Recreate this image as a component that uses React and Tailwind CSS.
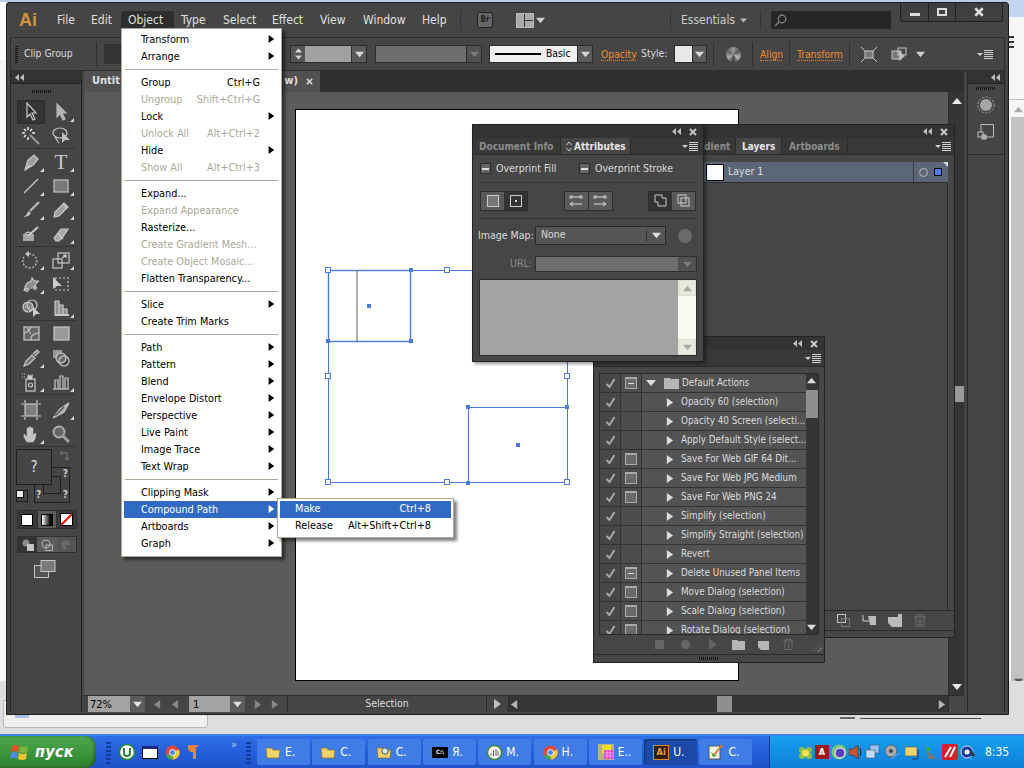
import React from "react";

const Down = ({ c = "#d0d0d0", s = 9 }) => (
  <svg width={s} height={s} viewBox="0 0 10 10"><path d="M0 2h10L5 8z" fill={c} /></svg>
);
const Right = ({ c = "#000", s = 8 }) => (
  <svg width={s} height={s} viewBox="0 0 10 10"><path d="M2 0l7 5-7 5z" fill={c} /></svg>
);
const Up = ({ c = "#e0e0e0", s = 9 }) => (
  <svg width={s} height={s} viewBox="0 0 10 10"><path d="M0 8h10L5 2z" fill={c} /></svg>
);
const Left = ({ c = "#888", s = 9 }) => (
  <svg width={s} height={s} viewBox="0 0 10 10"><path d="M8 0L1 5l7 5z" fill={c} /></svg>
);
const Collapse = ({ c = "#bdbdbd" }) => (
  <svg width="9" height="7" viewBox="0 0 9 7"><path d="M4 0v7L0 3.5zM9 0v7L5 3.5z" fill={c} /></svg>
);
const CloseX = ({ c = "#c8c8c8", s = 8 }) => (
  <svg width={s} height={s} viewBox="0 0 8 8"><path d="M1 1l6 6M7 1L1 7" stroke={c} strokeWidth="2" /></svg>
);
const PanelMenu = () => (
  <svg width="16" height="9" viewBox="0 0 16 9" fill="#d0d0d0">
    <path d="M0 3h6L3 6z" /><path d="M7 0h9v1H7zM7 2h9v1H7zM7 4h9v1H7zM7 6h9v1H7zM7 8h9v1H7z" />
  </svg>
);
const Grip = () => (
  <div className="h-[3px] w-[20px] bg-[repeating-linear-gradient(90deg,#151515_0,#151515_1px,transparent_1px,transparent_2px)]" />
);
const Corner = () => (
  <svg className="absolute right-[1px] bottom-[2px]" width="4" height="4" viewBox="0 0 4 4"><path d="M4 0v4H0z" fill="#d8d8d8" /></svg>
);

const I = ({ children }) => (
  <svg width="20" height="20" viewBox="0 0 20 20" fill="none" stroke="#c9c9c9" strokeWidth="1.2">{children}</svg>
);

const tools = [
  [
    { icon: <I><path d="M6 1v14l3-3 3 6 2-1-3-6h4z" fill="#2e2e2e" /></I>, active: true },
    { icon: <I><path d="M6 2v13l3-3 3 6 2-1-3-6h4z" fill="#b5b5b5" stroke="#b5b5b5" /></I>, corner: true },
    { icon: <I><path d="M9 9l9 9" strokeWidth="2" stroke="#9a9a9a" /><path d="M7 1v3M7 11v3M1 7h3M11 7h3M3 3l2 2M11 3L9 5M3 11l2-2" stroke="#e8e8e8" strokeWidth="1.5" /></I> },
    { icon: <I><ellipse cx="9" cy="7" rx="7" ry="5" /><path d="M4 11q3 5 4 6" /><path d="M11 6v11l3-3h5z" fill="#c0c0c0" stroke="none" /></I> },
  ],
  [
    { icon: <I><path d="M4 18l3-10 6-5 4 4-5 6zM4 18l5-5" fill="#9d9d9d" /></I>, corner: true },
    { text: "T", corner: true },
    { icon: <I><path d="M3 17L17 3" /></I>, corner: true },
    { icon: <I><rect x="3" y="4" width="14" height="12" fill="#787878" stroke="#c4c4c4" /></I>, corner: true },
    { icon: <I><path d="M18 2L9 11" strokeWidth="2.4" stroke="#b5b5b5" /><path d="M2 17q4-1 5-6l3 2q-2 4-8 4z" fill="#c9c9c9" stroke="none" /></I>, corner: true },
    { icon: <I><path d="M3 17l1-5 9-9 4 4-9 9z" fill="#9d9d9d" stroke="#c9c9c9" /><path d="M12 4l4 4" /></I>, corner: true },
    { icon: <I><path d="M2 10h11v7H2z" fill="#a5a5a5" stroke="none" /><path d="M7 12L17 3" strokeWidth="2" /><path d="M4 10q3-3 5-1" /></I> },
    { icon: <I><path d="M3 14l7-9h7l-6 9-3 3H5z" fill="#a8a8a8" /><path d="M7 9l5 6" /></I>, corner: true },
  ],
  [
    { icon: <I><path d="M8 4a7 7 0 1 1-5 3" strokeDasharray="2 1.6" /><path d="M8 1v6L4 4z" fill="#c9c9c9" stroke="none" /></I>, corner: true },
    { icon: <I><rect x="2" y="9" width="9" height="9" /><rect x="7" y="3" width="11" height="10" /><path d="M11 8l4-3M12 5h3v3" /></I>, corner: true },
    { icon: <I><path d="M3 17q2-9 5-9t3-5q1 5 7 4-4 2-4 7" fill="#8f8f8f" /><circle cx="6" cy="16" r="1.4" /><circle cx="14" cy="14" r="1.4" /></I>, corner: true },
    { icon: <I><rect x="4" y="4" width="13" height="12" strokeDasharray="2 2" /><path d="M2 3v12l4-3h5z" fill="#c9c9c9" stroke="none" /></I> },
    { icon: <I><circle cx="7" cy="9" r="5" fill="#808080" /><circle cx="11" cy="7" r="5" /><path d="M2 9h10" strokeDasharray="1 1" /><path d="M12 9v10l3-3h4z" fill="#d0d0d0" stroke="none" /></I> },
    { icon: <I><path d="M4 3h4v14H4zM8 7h4v10H8zM12 11h4v6h-4z" fill="#8f8f8f" /><path d="M4 17h14" strokeWidth="2" /></I>, corner: true },
  ],
  [
    { icon: <I><rect x="3" y="3" width="15" height="13" fill="#666" /><path d="M3 9q5-1 7-6M10 16q-1-6 8-7M6 4q4 5 3 6" /></I> },
    { icon: <I><rect x="3" y="3" width="15" height="13" fill="#999" /></I> },
    { icon: <I><path d="M3 18l2-5 6-6 3 3-6 6zM12 6l4-4 2 2-4 4" fill="#777" /></I>, corner: true },
    { icon: <I><rect x="2" y="2" width="9" height="8" fill="#9a9a9a" stroke="none" /><circle cx="10" cy="10" r="5" fill="#6a6a6a" /><circle cx="13" cy="13" r="5" /></I> },
    { icon: <I><rect x="5" y="7" width="9" height="12" /><circle cx="9.5" cy="13" r="2" /><path d="M1 2h4M1 5h4M7 3h5" strokeDasharray="1 1" /><rect x="7" y="4" width="4" height="3" fill="#c9c9c9" /></I>, corner: true },
    { icon: <I><path d="M2 17h16" /><path d="M4 17V8h3v9M9 17V4h3v13M14 17V6h3v11" /></I>, corner: true },
  ],
  [
    { icon: <I><rect x="4" y="4" width="12" height="12" fill="#7e7e7e" /><path d="M0 4h3M17 4h3M0 16h3M17 16h3M4 0v3M4 17v3M16 0v3M16 17v3" /></I> },
    { icon: <I><path d="M2 18l7-9 9-6-5 9z" fill="#b0b0b0" /><path d="M4 16L13 7" stroke="#4a4a4a" /></I>, corner: true },
    { icon: <I><path d="M6 18Q2 13 3 10l3 3V4h2v6V3h2v7V4h2v7l3-2q0 6-3 9z" fill="#c4c4c4" stroke="#c4c4c4" strokeWidth=".6" /></I>, corner: true },
    { icon: <I><circle cx="8" cy="8" r="5.5" fill="#666" stroke="#b0b0b0" strokeWidth="1.8" /><path d="M12 12l6 6" strokeWidth="3" stroke="#a0a0a0" /></I> },
  ],
];

const Tool = ({ t }) => (
  <div className={`relative flex h-[24px] w-[28px] items-center justify-center ${t.active ? "border border-[#2c2c2c] bg-[#343434]" : ""}`}>
    {t.text ? <span className="font-['Liberation_Serif',serif] text-[21px] leading-none text-[#c9c9c9]">{t.text}</span> : t.icon}
    {t.corner && <Corner />}
  </div>
);

const Toolbar = () => (
  <div className="flex w-[72px] flex-col border-x border-[#262626] bg-[#454545]">
    <div className="flex h-[13px] items-center border-b border-[#222] bg-[#333] pl-[4px]"><Collapse /></div>
    <div className="flex h-[14px] items-center justify-center pr-[8px]"><Grip /></div>
    <div className="flex flex-col items-center pb-[1px] pt-[2px]">
      {tools.map((g, i) => (
        <div key={i} className="w-full">
          <div className="mx-auto grid w-[60px] grid-cols-2 justify-items-center">
            {g.map((t, j) => <Tool key={j} t={t} />)}
          </div>
          <div className={`mx-[5px] h-[1px] bg-[#333] ${i === 3 ? "mb-[3px]" : "mb-[1px]"}`} />
        </div>
      ))}
    </div>
    {/* fill and stroke proxy */}
    <div className="relative ml-[5px] h-[56px] w-[56px]">
      <div className="absolute left-[18px] top-[18px] h-[36px] w-[36px] border border-[#1f1f1f] bg-[#454545]">
        <span className="absolute right-[1px] top-0 text-[10px] font-bold leading-[12px] text-[#ccc]">?</span>
        <span className="absolute bottom-[1px] left-[1px] text-[10px] font-bold leading-[12px] text-[#ccc]">?</span>
        <span className="absolute bottom-[1px] right-[1px] text-[10px] font-bold leading-[12px] text-[#ccc]">?</span>
        <div className="absolute left-[8px] top-[8px] h-[18px] w-[18px] border border-[#1f1f1f]" />
      </div>
      <div className="absolute left-0 top-0 flex h-[36px] w-[36px] items-center justify-center border border-[#1f1f1f] bg-[#454545] text-[15px] text-[#ddd]">?</div>
      <svg className="absolute left-[43px] top-[1px]" width="12" height="12" viewBox="0 0 12 12" fill="none" stroke="#6a6a6a" strokeWidth="1.5"><path d="M1 3h7v6M1 3l2-2M1 3l2 2M8 10L6 8M8 10l2-2" /></svg>
      <div className="absolute left-0 top-[41px] h-[12px] w-[12px] border border-[#1a1a1a]">
        <div className="absolute left-[-1px] top-[-1px] h-[8px] w-[8px] border border-[#111] bg-[#eee]" />
      </div>
    </div>
    <div className="ml-[6px] mt-[5px] flex h-[19px] w-[60px] border border-[#2f2f2f]">
      <div className="flex flex-1 items-center justify-center bg-[#3a3a3a]"><div className="h-[12px] w-[12px] border border-black bg-white" /></div>
      <div className="flex flex-1 items-center justify-center border-x border-[#333] bg-[#5c5c5c]"><div className="h-[12px] w-[12px] border border-black bg-linear-to-r from-white to-black" /></div>
      <div className="flex flex-1 items-center justify-center bg-[#3a3a3a]">
        <svg width="13" height="13" viewBox="0 0 13 13"><rect x=".5" y=".5" width="12" height="12" fill="#fff" stroke="#000" /><path d="M12 1L1 12" stroke="#f00" strokeWidth="2" /></svg>
      </div>
    </div>
    <div className="ml-[6px] mt-[7px] flex h-[17px] w-[60px] border border-[#2f2f2f]">
      <div className="flex flex-1 items-center justify-center bg-[#333]"><svg width="12" height="12" viewBox="0 0 12 12"><circle cx="4" cy="4" r="3.5" fill="#8a8a8a" /><rect x="5" y="5" width="7" height="7" fill="#c4c4c4" /></svg></div>
      <div className="flex flex-1 items-center justify-center bg-[#5c5c5c]"><svg width="12" height="12" viewBox="0 0 12 12" fill="none" stroke="#b5b5b5"><circle cx="5" cy="5" r="4" /><rect x="5" y="6" width="6.5" height="5.5" /></svg></div>
      <div className="flex flex-1 items-center justify-center bg-[#555]"><svg width="12" height="12" viewBox="0 0 12 12"><circle cx="6" cy="6" r="4.5" fill="#6a6a6a" /><rect x="6" y="6" width="4" height="4" fill="#555" /></svg></div>
    </div>
    <div className="ml-[23px] mt-[7px]">
      <svg width="22" height="18" viewBox="0 0 22 18" fill="none" stroke="#c4c4c4"><rect x=".5" y="5.5" width="14" height="12" fill="#555" /><rect x="7" y=".5" width="14" height="11" fill="#7a7a7a" /></svg>
    </div>
  </div>
);

const ArrowBox = ({ c = "#d8d8d8", w = "w-[15px]", bg = "bg-[#5c5c5c]" }) => (
  <div className={`flex h-full items-center justify-center border-l border-[#2b2b2b] ${w} ${bg}`}><Down c={c} /></div>
);
const Sep = ({ cls }) => <div className={`h-[24px] w-[1px] bg-[#303030] ${cls}`} />;
const Link = ({ children, cls }) => (
  <span className={`whitespace-nowrap border-b border-dotted border-[#e8852b] leading-[12px] text-[#f08c2e] ${cls}`}>{children}</span>
);

const ControlBar = () => (
  <div className="flex h-[34px] items-center border border-[#2e2e2e] bg-[#454545] text-[10.3px] text-[#dcdcdc]">
    <div className="ml-[4px] h-[18px] w-[3px] bg-[repeating-linear-gradient(0deg,#151515_0,#151515_1px,transparent_1px,transparent_2px)]" />
    <span className="ml-[6px] w-[61px] whitespace-nowrap">Clip Group</span>
    <Sep cls="ml-[11px]" />
    <div className="ml-[7px] h-[20px] w-[20px] bg-[#333]" />
    <div className="ml-[166px] flex h-[18px] border border-[#2b2b2b]">
      <div className="flex w-[14px] flex-col items-center justify-center bg-[#555]"><Up s={7} /><Down s={7} /></div>
      <div className="w-[46px] bg-[#a0a0a0]" />
      <ArrowBox />
    </div>
    <div className="ml-[8px] flex h-[18px] border border-[#2b2b2b]">
      <div className="w-[90px] bg-[#6e6e6e]" />
      <ArrowBox c="#7a7a7a" bg="bg-[#505050]" />
    </div>
    <div className="ml-[7px] flex h-[18px] border border-[#2b2b2b]">
      <div className="flex w-[87px] items-center bg-[#efefef] pl-[5px]">
        <div className="h-[2px] w-[46px] bg-black" />
        <span className="ml-[5px] text-black">Basic</span>
      </div>
      <ArrowBox />
    </div>
    <Link cls="ml-[8px] w-[35px]">Opacity</Link>
    <span className="ml-[5px] w-[28px] whitespace-nowrap">Style:</span>
    <div className="ml-[5px] flex h-[18px] border border-[#2b2b2b]">
      <div className="w-[17px] bg-[#e8e8e8]" />
      <ArrowBox w="w-[14px]" />
    </div>
    <Sep cls="ml-[6px]" />
    <div className="ml-[12px] h-[15px] w-[15px] rounded-full bg-[conic-gradient(#999,#555,#bbb,#444,#aaa,#666,#999)]" />
    <Sep cls="ml-[11px]" />
    <Link cls="ml-[7px] w-[22px]">Align</Link>
    <Sep cls="ml-[7px]" />
    <Link cls="ml-[7px] w-[45px]">Transform</Link>
    <Sep cls="ml-[7px]" />
    <svg className="ml-[11px]" width="16" height="15" viewBox="0 0 16 15" fill="none" stroke="#c8c8c8"><rect x="4" y="4" width="8" height="7" fill="#777" /><path d="M0 0l4 4M16 0l-4 4M0 15l4-4M16 15l-4-4" /></svg>
    <svg className="ml-[14px]" width="17" height="15" viewBox="0 0 17 15" fill="none" stroke="#c8c8c8"><rect x="1" y="4" width="9" height="8" fill="#777" /><rect x="7" y="1" width="8" height="7" /><path d="M8 4v10l6-5z" fill="#bbb" stroke="none" /></svg>
    <div className="ml-[8px]"><Down /></div>
    <div className="ml-[52px]"><PanelMenu /></div>
  </div>
);

const menuNames = [
  ["File", "w-[34px]"], ["Edit", "w-[37px]"], ["Object", "w-[53px]"], ["Type", "w-[42px]"], ["Select", "w-[49px]"],
  ["Effect", "w-[48px]"], ["View", "w-[43px]"], ["Window", "w-[59px]"], ["Help", "w-[45px]"],
];

const TitleBar = () => (
  <div className="relative flex h-[34px] items-center text-[12px] text-[#e0e0e0]">
    <span className="ml-[9px] w-[31px] font-['Liberation_Sans',sans-serif] text-[18px] font-bold leading-none text-[#d2923a]">Ai</span>
    {menuNames.map(([n, w]) => (
      <div key={n} className={`flex h-[18px] items-center pl-[7px] ${w} ${n === "Object" ? "rounded-t-[2px] bg-[#2e2e2e]" : ""}`}>{n}</div>
    ))}
    <div className="h-[20px] w-[1px] bg-[#333]" />
    <div className="ml-[16px] flex h-[16px] w-[16px] items-center justify-center rounded-[2px] border border-[#222] bg-[#666] text-[8px] font-bold text-[#222]">Br</div>
    <div className="ml-[23px] flex h-[15px] w-[18px] border border-[#bbb] bg-[#888]">
      <div className="w-[8px] border-r border-[#333] bg-[#aaa]" />
      <div className="flex-1 border-b-0 bg-[linear-gradient(#aaa_45%,#333_45%,#333_55%,#aaa_55%)]" />
    </div>
    <div className="ml-[2px]"><Down /></div>
    <div className="ml-[125px] h-[20px] w-[1px] bg-[#333]" />
    <span className="ml-[10px] w-[51px] text-[12px] text-[#ccc]">Essentials</span>
    <div className="ml-[8px]"><Down c="#bbb" s={7} /></div>
    <div className="ml-[13px] h-[20px] w-[1px] bg-[#333]" />
    <div className="ml-[10px] flex h-[18px] w-[120px] items-center rounded-[2px] bg-[#262626] pl-[3px]">
      <svg width="13" height="13" viewBox="0 0 13 13" fill="none" stroke="#8a8a8a" strokeWidth="1.2"><circle cx="8" cy="5" r="3.8" /><path d="M5 8l-4 4" /></svg>
    </div>
    <div className="absolute right-[2px] top-0 flex h-[19px] w-[103px] rounded-b-[3px] border border-t-0 border-[#202020] bg-[#3f3f3f]">
      <div className="flex w-[28px] items-center justify-center border-r border-[#202020]"><div className="mt-[4px] h-[3px] w-[10px] bg-[#ddd]" /></div>
      <div className="flex w-[27px] items-center justify-center border-r border-[#202020]"><div className="h-[8px] w-[10px] border-2 border-[#ddd]" /></div>
      <div className="flex flex-1 items-center justify-center"><CloseX c="#ddd" s={10} /></div>
    </div>
  </div>
);

const StatusBar = () => (
  <div className="flex h-[17px] items-stretch border-t border-[#2b2b2b] bg-[#454545] text-[#dcdcdc]">
    <div className="ml-[4px] w-[42px] bg-[#a3a3a3] pl-[2px] text-[11px] leading-[17px] text-black">72%</div>
    <div className="flex w-[15px] items-center justify-center bg-[#5c5c5c]"><Down c="#e0e0e0" /></div>
    <div className="flex w-[44px] items-center justify-center gap-[9px]"><Left /><Left /></div>
    <div className="w-[41px] bg-[#a3a3a3] pl-[4px] text-[11px] leading-[17px] text-black">1</div>
    <div className="flex w-[15px] items-center justify-center bg-[#5c5c5c]"><Down c="#e0e0e0" /></div>
    <div className="flex w-[42px] items-center justify-center gap-[8px]"><Right c="#888" s={9} /><Right c="#888" s={9} /></div>
    <div className="flex w-[200px] items-center justify-center border-x border-[#2b2b2b] text-[10.5px]">Selection</div>
    <div className="flex w-[21px] items-center justify-center"><Right c="#c0c0c0" s={10} /></div>
    <div className="relative flex-1 border-l border-[#2b2b2b] bg-[#363636]">
      <div className="absolute left-[1px] top-[4px]"><Left c="#b5b5b5" /></div>
      <div className="absolute right-[2px] top-[4px]"><Right c="#b5b5b5" s={9} /></div>
      <div className="absolute left-[208px] top-0 h-full w-[15px] bg-[#8f8f8f]" />
    </div>
    <div className="w-[16px] border-l border-[#2b2b2b] bg-[#484848]" />
  </div>
);

const H = ({ x, y }) => <rect x={x - 2.5} y={y - 2.5} width="5" height="5" fill="#fff" stroke="#4a7bdc" />;
const B = ({ x, y }) => <rect x={x - 2} y={y - 2} width="4" height="4" fill="#4a7bdc" />;

const Artwork = () => (
  <svg className="absolute inset-0" width="442" height="570" viewBox="296 110 442 570" fill="none">
    <rect x="328.5" y="270.5" width="239" height="212" stroke="#4a7bdc" />
    <rect x="328.5" y="270.5" width="82" height="71" stroke="#4a7bdc" strokeWidth="1.4" />
    <path d="M357 270v71" stroke="#8a8a8a" strokeWidth="1.4" />
    <rect x="468.5" y="407.5" width="99" height="75" stroke="#4a7bdc" />
    <B x={369} y={306} /><B x={518} y={445} />
    <B x={328} y={270} /><B x={411} y={270} /><B x={411} y={341} /><B x={328} y={341} />
    <B x={468} y={407} /><B x={567} y={407} /><B x={468} y={483} />
    <H x={328} y={270} /><H x={447} y={270} /><H x={328} y={376} /><H x={567} y={376} />
    <H x={328} y={482} /><H x={447} y={482} /><H x={567} y={482} />
  </svg>
);

const DocArea = () => (
  <div className="ml-[2px] flex w-[881px] flex-col">
    <div className="flex h-[21px] bg-[#303030]">
      <div className="flex w-[236px] items-center justify-between bg-[#515151] pl-[8px] pr-[7px] text-[11px] font-bold text-[#e0e0e0]">
        <span className="whitespace-nowrap">Untit</span>
        <span className="flex items-center gap-[8px]"><span>w)</span><CloseX c="#ccc" s={7} /></span>
      </div>
    </div>
    <div className="flex min-h-0 flex-1">
      <div className="relative flex-1 bg-[#5b5b5b]">
        <div className="absolute left-[212px] top-[18px] h-[570px] w-[442px] bg-white outline outline-1 outline-black">
          <Artwork />
        </div>
      </div>
      <div className="relative w-[16px] border-l border-[#2b2b2b] bg-[#353535]">
        <div className="absolute left-[3px] top-[4px]"><Up c="#e8e8e8" s={10} /></div>
        <div className="absolute left-[5px] top-[294px] h-[16px] w-[10px] bg-[#999]" />
        <div className="absolute bottom-[3px] left-[3px]"><Down c="#e8e8e8" s={10} /></div>
      </div>
    </div>
    <StatusBar />
  </div>
);

const RightStrip = () => (
  <div className="ml-[3px] flex w-[38px] flex-col border-x border-[#262626] bg-[#454545]">
    <div className="flex h-[13px] items-center justify-end border-b border-[#222] bg-[#333] pr-[4px]"><Collapse /></div>
    <div className="flex h-[8px] items-center justify-center"><Grip /></div>
    <div className="flex h-[63px] flex-col items-center gap-[9px] border-b border-[#2b2b2b] pt-[4px]">
      <svg width="18" height="18" viewBox="0 0 18 18"><circle cx="9" cy="9" r="6" fill="#a5a5a5" /><circle cx="9" cy="9" r="8" fill="none" stroke="#9a9a9a" strokeDasharray="2.5 1.2" /></svg>
      <svg width="18" height="18" viewBox="0 0 18 18" fill="none" stroke="#bdbdbd"><path d="M4 9V1.5h12.5V14H9" /><rect x="1" y="9" width="5" height="5" /><rect x="5" y="12" width="4" height="4" fill="#aaa" /></svg>
    </div>
  </div>
);

const menuItems = [
  ["Transform", "", "s"], ["Arrange", "", "s"], "-",
  ["Group", "Ctrl+G"], ["Ungroup", "Shift+Ctrl+G", "d"], ["Lock", "", "s"], ["Unlock All", "Alt+Ctrl+2", "d"], ["Hide", "", "s"], ["Show All", "Alt+Ctrl+3", "d"], "-",
  ["Expand..."], ["Expand Appearance", "", "d"], ["Rasterize..."], ["Create Gradient Mesh...", "", "d"], ["Create Object Mosaic...", "", "d"], ["Flatten Transparency..."], "-",
  ["Slice", "", "s"], ["Create Trim Marks"], "-",
  ["Path", "", "s"], ["Pattern", "", "s"], ["Blend", "", "s"], ["Envelope Distort", "", "s"], ["Perspective", "", "s"], ["Live Paint", "", "s"], ["Image Trace", "", "s"], ["Text Wrap", "", "s"], "-",
  ["Clipping Mask", "", "s"], ["Compound Path", "", "s", "a"], ["Artboards", "", "s"], ["Graph", "", "s"],
];

const ObjectMenu = () => (
  <div className="absolute left-[121px] top-[28px] z-20 w-[161px] border border-[#aca899] bg-white px-[2px] pb-[4px] pt-[2px] text-[10.8px] leading-[17px] text-black shadow-[3px_3px_3px_rgba(0,0,0,0.5)]">
    {menuItems.map((m, i) =>
      m === "-" ? (
        <div key={i} className="flex h-[9px] items-center px-[1px]"><div className="h-[1px] w-full bg-[#aca899]" /></div>
      ) : (
        <div key={i} className={`relative flex h-[17px] items-center justify-between pl-[17px] pr-[19px] ${m[3] ? "bg-[#316ac5] text-white" : ""} ${m[2] === "d" ? "text-[#aca899]" : ""}`}>
          <span className="whitespace-nowrap">{m[0]}</span>
          <span className="whitespace-nowrap">{m[1]}</span>
          {m[2] === "s" && <div className="absolute right-[4px] top-[4px]"><Right c={m[3] ? "#fff" : "#000"} /></div>}
        </div>
      )
    )}
  </div>
);

const SubMenu = () => (
  <div className="absolute left-[277px] top-[498px] z-30 w-[177px] border border-[#aca899] bg-white px-[2px] py-[2px] text-[10.8px] text-black shadow-[3px_3px_3px_rgba(0,0,0,0.5)]">
    <div className="flex h-[17px] items-center justify-between bg-[#316ac5] pl-[15px] pr-[20px] text-white"><span>Make</span><span>Ctrl+8</span></div>
    <div className="flex h-[17px] items-center justify-between pl-[15px] pr-[20px]"><span>Release</span><span>Alt+Shift+Ctrl+8</span></div>
  </div>
);

const PanelTop = () => (
  <div className="flex h-[13px] items-center justify-end gap-[8px] rounded-t-[2px] bg-[#333] pr-[6px]"><Collapse /><CloseX /></div>
);

const Tab = ({ children, active, cls }) => (
  <div className={`flex h-full items-center whitespace-nowrap border-r border-[#2a2a2a] font-bold ${active ? "bg-[#464646] text-[#e6e6e6]" : "text-[#8c8c8c]"} ${cls}`}>{children}</div>
);

const LayersPanel = () => (
  <div className="absolute left-[620px] top-[124px] z-10 flex h-[514px] w-[335px] flex-col border border-[#222] bg-[#464646] text-[10.5px] text-[#dcdcdc]">
    <PanelTop />
    <div className="flex h-[17px] border-b border-[#2a2a2a] bg-[#383838] text-[10px]">
      <div className="w-[83px]" />
      <Tab cls="w-[32px]"><span className="pl-[0px]">dient</span></Tab>
      <Tab active cls="w-[46px] pl-[6px]">Layers</Tab>
      <Tab cls="w-[66px] pl-[7px]">Artboards</Tab>
      <div className="ml-auto self-center pr-[3px]"><PanelMenu /></div>
    </div>
    <div className="ml-[83px] mr-[6px] mt-[7px] flex h-[21px] items-center border-b border-[#2a2a2a] bg-[#5b6678]">
      <div className="ml-[2px] h-[17px] w-[18px] border border-black bg-white" />
      <span className="ml-[4px]">Layer 1</span>
      <div className="relative ml-auto flex h-full w-[35px] items-center gap-[6px] border-l border-[#3a3a3a] pl-[5px]">
        <div className="h-[9px] w-[9px] rounded-full border border-[#bbb]" />
        <div className="h-[8px] w-[8px] border border-black bg-[#4a80ff]" />
        <svg className="absolute right-0 top-0" width="5" height="5" viewBox="0 0 5 5"><path d="M0 0h5v5z" fill="#ddd" /></svg>
      </div>
    </div>
    <div className="ml-[83px] mr-[6px] flex-1 border-r border-[#2a2a2a]" />
    <div className="ml-[204px] flex h-[20px] items-center gap-[12px] border-t border-[#2a2a2a] pl-[12px]">
      <svg width="13" height="13" viewBox="0 0 13 13" fill="none" stroke="#c4c4c4"><rect x=".5" y=".5" width="8" height="8" /><rect x="4.5" y="4.5" width="8" height="8" stroke="#777" /></svg>
      <svg width="14" height="13" viewBox="0 0 14 13"><path d="M6 2h8v9H8z" fill="#bbb" /><path d="M1 1v6h6" fill="none" stroke="#ccc" /></svg>
      <svg width="14" height="13" viewBox="0 0 14 13"><path d="M0 3h10V0h4v13H4L0 9z" fill="#bbb" /></svg>
      <svg width="12" height="13" viewBox="0 0 12 13" fill="none" stroke="#6e6e6e"><path d="M0 3h12M3 3V1h6v2M2 3v9h8V3M5 5v6M7 5v6" /></svg>
    </div>
    <div className="ml-[204px] h-[7px] border-t border-[#2a2a2a]" />
  </div>
);

const Check = ({ label, cls }) => (
  <div className={`flex items-center gap-[5px] ${cls}`}>
    <div className="flex h-[11px] w-[11px] items-center justify-center border border-[#2a2a2a] bg-[#666]"><div className="h-[2px] w-[7px] bg-[#ddd]" /></div>
    <span>{label}</span>
  </div>
);

const Seg = ({ on, children }) => (
  <div className={`flex h-full w-[23px] items-center justify-center ${on ? "bg-[#333]" : "bg-[#5a5a5a]"}`}>{children}</div>
);
const AlignIcon = ({ flip }) => (
  <svg width="14" height="12" viewBox="0 0 14 12" fill="none" stroke="#ddd"><circle cx="2" cy="2" r="1.2" /><circle cx="12" cy="2" r="1.2" /><path d="M3 2h8" /><path d={flip ? "M1 9h12M10 7l3 2-3 2" : "M13 9H1M4 7L1 9l3 2"} /></svg>
);

const AttributesPanel = () => (
  <div className="absolute left-[472px] top-[124px] z-[15] flex h-[238px] w-[232px] flex-col border border-[#222] bg-[#464646] text-[10.5px] text-[#dcdcdc] shadow-[2px_2px_3px_rgba(0,0,0,0.4)]">
    <PanelTop />
    <div className="flex h-[17px] border-b border-[#2a2a2a] bg-[#383838] text-[10px]">
      <Tab cls="w-[88px] pl-[6px]">Document Info</Tab>
      <Tab active cls="w-[70px] pl-[5px]">
        <svg className="mr-[2px]" width="6" height="11" viewBox="0 0 6 11" fill="none" stroke="#ccc"><path d="M.5 4L3 1l2.5 3M.5 7L3 10l2.5-3" /></svg>
        Attributes
      </Tab>
      <div className="ml-auto self-center pr-[5px]"><PanelMenu /></div>
    </div>
    <div className="flex h-[27px] items-center">
      <Check label="Overprint Fill" cls="ml-[7px] w-[99px]" />
      <Check label="Overprint Stroke" />
    </div>
    <div className="mx-[7px] h-[1px] bg-[#333]" />
    <div className="flex h-[35px] items-center justify-between px-[7px]">
      <div className="flex h-[20px] border border-[#2e2e2e]">
        <Seg><div className="h-[12px] w-[12px] border border-[#ccc] bg-[#777]" /></Seg>
        <Seg on><div className="flex h-[12px] w-[12px] items-center justify-center border border-[#ccc]"><div className="h-[2px] w-[2px] bg-[#ddd]" /></div></Seg>
      </div>
      <div className="flex h-[20px] border border-[#2e2e2e]">
        <Seg><AlignIcon /></Seg>
        <div className="w-[1px] bg-[#2e2e2e]" />
        <Seg><AlignIcon flip /></Seg>
      </div>
      <div className="flex h-[20px] border border-[#2e2e2e]">
        <Seg on><svg width="13" height="13" viewBox="0 0 13 13" fill="none" stroke="#ccc"><path d="M1 1h7v3h4v8H4V8H1z" /></svg></Seg>
        <Seg><svg width="13" height="13" viewBox="0 0 13 13" fill="none" stroke="#ccc"><rect x="1" y="1" width="8" height="8" /><rect x="4" y="4" width="8" height="8" /></svg></Seg>
      </div>
    </div>
    <div className="mx-[7px] h-[1px] bg-[#333]" />
    <div className="mt-[7px] flex h-[19px] items-center">
      <span className="ml-[5px] w-[57px] whitespace-nowrap">Image Map:</span>
      <div className="flex h-full w-[131px] items-center border border-[#2a2a2a] bg-[#565656]">
        <span className="flex-1 pl-[5px] pb-[1px]">None</span>
        <div className="mr-[1px] h-[13px] w-[1px] bg-[#333]" />
        <div className="flex w-[17px] justify-center"><Down c="#e0e0e0" /></div>
      </div>
      <div className="ml-[12px] h-[14px] w-[14px] rounded-full bg-[#6a6a6a]" />
    </div>
    <div className="mt-[11px] flex h-[16px] items-center">
      <span className="w-[59px] pr-[0px] text-right text-[#8c8c8c]">URL:</span>
      <div className="ml-[3px] flex h-full w-[162px] border border-[#2f2f2f] bg-[#6e6e6e]">
        <div className="flex-1" />
        <div className="flex w-[18px] items-center justify-center bg-[#505050]"><Down c="#7a7a7a" /></div>
      </div>
    </div>
    <div className="ml-[6px] mt-[7px] flex h-[77px] w-[218px] border border-[#2a2a2a] bg-[#a3a3a3]">
      <div className="flex-1" />
      <div className="flex w-[18px] flex-col justify-between bg-[#fbfbf3]">
        <div className="flex h-[16px] items-center justify-center border border-[#ddddd0] bg-[#e9e9df]"><Up c="#aaa" /></div>
        <div className="flex h-[16px] items-center justify-center border border-[#ddddd0] bg-[#e9e9df]"><Down c="#aaa" /></div>
      </div>
    </div>
  </div>
);

const actionRows = [
  ["Opacity 60 (selection)", ""], ["Opacity 40 Screen (selecti...", ""], ["Apply Default Style (select...", ""],
  ["Save For Web GIF 64 Dit...", "b"], ["Save For Web JPG Medium", "b"], ["Save For Web PNG 24", "b"],
  ["Simplify (selection)", ""], ["Simplify Straight (selection)", ""], ["Revert", ""],
  ["Delete Unused Panel Items", "m"], ["Move Dialog (selection)", "b"], ["Scale Dialog (selection)", "b"], ["Rotate Dialog (selection)", "b"],
];

const Tick = () => (
  <svg width="11" height="11" viewBox="0 0 11 11" fill="none"><path d="M1.5 6l3 3 5-8" stroke="#a8a8a8" strokeWidth="2" /></svg>
);
const Dlg = ({ minus }) => (
  <div className="flex h-[12px] w-[12px] items-center justify-center border border-[#aaa] bg-[#6a6a6a] [border-top-width:2px]">
    {minus && <div className="h-[1px] w-[6px] bg-[#ddd]" />}
  </div>
);

const Row = ({ dlg, children }) => (
  <div className="flex h-[19px] shrink-0 border-b border-[#333]">
    <div className="flex w-[21px] shrink-0 items-center justify-center border-r border-[#333] bg-[#474747]"><Tick /></div>
    <div className="flex w-[21px] shrink-0 items-center justify-center border-r border-[#333] bg-[#4c4c4c]">{dlg && <Dlg minus={dlg === "m"} />}</div>
    <div className="flex min-w-0 flex-1 items-center whitespace-nowrap bg-[#535353] text-[9.8px] text-[#dcdcdc]">{children}</div>
  </div>
);

const ActionsPanel = () => (
  <div className="absolute left-[593px] top-[336px] z-[12] flex h-[327px] w-[232px] flex-col border border-[#222] bg-[#464646]">
    <PanelTop />
    <div className="flex h-[17px] justify-end border-b border-[#2a2a2a] bg-[#383838] pr-[3px] pt-[4px]"><PanelMenu /></div>
    <div className="mx-[5px] mt-[6px] flex h-[262px] overflow-hidden border border-[#2a2a2a]">
      <div className="flex min-w-0 flex-1 flex-col overflow-hidden">
        <Row dlg="m">
          <div className="ml-[4px]"><Down c="#ddd" s={10} /></div>
          <svg className="ml-[8px]" width="15" height="12" viewBox="0 0 15 12"><path d="M0 1h6l1 1h8v10H0z" fill="#b5b5b5" /></svg>
          <span className="ml-[3px]">Default Actions</span>
        </Row>
        {actionRows.map(([n, d]) => (
          <Row key={n} dlg={d}>
            <div className="ml-[23px]"><Right c="#ddd" s={9} /></div>
            <span className="ml-[7px]">{n}</span>
          </Row>
        ))}
      </div>
      <div className="relative w-[12px] shrink-0 bg-[#353535]">
        <div className="absolute left-[1px] top-[2px]"><Up c="#ddd" /></div>
        <div className="absolute left-0 top-[16px] h-[28px] w-[12px] bg-[#8f8f8f]" />
        <div className="absolute bottom-[2px] left-[1px]"><Down c="#ddd" /></div>
      </div>
    </div>
    <div className="relative flex h-[19px] items-center pl-[61px]">
      <div className="h-[9px] w-[9px] bg-[#656565]" />
      <div className="ml-[17px] h-[9px] w-[9px] rounded-full bg-[#656565]" />
      <div className="ml-[17px]"><Right c="#656565" s={11} /></div>
      <svg className="ml-[14px]" width="13" height="10" viewBox="0 0 13 10"><path d="M0 0h5l1 1h7v9H0z" fill="#b5b5b5" /></svg>
      <svg className="ml-[13px]" width="11" height="11" viewBox="0 0 11 11"><path d="M0 2h11v9H3L0 8z" fill="#b5b5b5" /></svg>
      <svg className="ml-[14px]" width="11" height="11" viewBox="0 0 11 11" fill="none" stroke="#6a6a6a"><path d="M0 2h11M3 2V.5h5V2M2 2v8.5h7V2M5.5 4v5" /></svg>
      <div className="absolute bottom-[2px] right-[2px] h-[9px] w-[9px] bg-[repeating-linear-gradient(135deg,#777_0,#777_1px,transparent_1px,transparent_3px)] [clip-path:polygon(100%_0,100%_100%,0_100%)]" />
    </div>
    <div className="flex h-[8px] items-center justify-center border-t border-[#2a2a2a]"><Grip /></div>
  </div>
);

const TaskIcon = ({ k }) => {
  if (k === "folder") return <svg width="15" height="13" viewBox="0 0 15 13"><path d="M0 2h6l1 2h7l-1 8H1z" fill="#f2d26a" stroke="#8a6d1a" strokeWidth=".7" /></svg>;
  if (k === "search") return <svg width="15" height="13" viewBox="0 0 15 13"><path d="M0 2h6l1 2h7l-1 8H1z" fill="#f2d26a" stroke="#8a6d1a" strokeWidth=".7" /><circle cx="8" cy="5" r="3.2" fill="#cfe8ff" stroke="#555" /></svg>;
  if (k === "cmd") return <div className="flex h-[11px] w-[16px] items-center justify-center bg-black text-[6px] font-bold leading-none text-white">C:\</div>;
  if (k === "bars") return <svg width="15" height="15" viewBox="0 0 15 15"><circle cx="7.5" cy="7.5" r="7" fill="#fff" stroke="#3a8a3a" strokeWidth="1.5" /><path d="M4 11V8M6.5 11V5M9 11V4M11 11V6" stroke="#555" /></svg>;
  if (k === "chrome") return <svg width="15" height="15" viewBox="0 0 15 15"><circle cx="7.5" cy="7.5" r="7" fill="#e0483c" /><path d="M7.5 7.5L1 11a7 7 0 0 0 7 3.5z" fill="#3fa850" /><path d="M7.5 7.5L8 14.5a7 7 0 0 0 6-10z" fill="#f5c932" /><circle cx="7.5" cy="7.5" r="3" fill="#4a86e8" stroke="#fff" /></svg>;
  if (k === "grid") return <svg width="16" height="16" viewBox="0 0 16 16"><rect width="16" height="16" fill="#b9b08a" /><rect x="4" y="1" width="9" height="8" fill="#f0e020" /><rect x="6" y="6" width="9" height="9" fill="#e040d0" /><path d="M9 6v9M12 6v9M6 9h9M6 12h9" stroke="#fff" strokeWidth=".5" /></svg>;
  if (k === "ai") return <div className="flex h-[15px] w-[16px] items-center justify-center border border-[#e08a20] bg-[#2e2010] text-[9px] font-bold leading-none text-[#e8a040]">Ai</div>;
  return <svg width="16" height="16" viewBox="0 0 16 16"><rect x="1" y="2" width="11" height="13" fill="#f4f4e4" stroke="#555" /><path d="M3 8l2 5 4-1z" fill="#50a040" /><path d="M6 11l8-10" stroke="#d08020" strokeWidth="2" /></svg>;
};

const taskButtons = [
  ["folder", "Е."], ["folder", "С."], ["search", "С."], ["cmd", "Я."], ["bars", "М."], ["chrome", "Н."], ["grid", "Е.."], ["ai", "U.", true], ["note", "С."],
];

const TrayIcons = () => (
  <div className="ml-[28px] flex items-center gap-[2px]">
    <svg width="15" height="15" viewBox="0 0 15 15"><circle cx="4" cy="5" r="3" fill="#8bc34a" /><circle cx="11" cy="5" r="3" fill="#8bc34a" /><circle cx="4" cy="11" r="3" fill="#8bc34a" /><circle cx="11" cy="11" r="3" fill="#8bc34a" /><circle cx="7.5" cy="8" r="3.5" fill="#fbe04a" /></svg>
    <div className="flex h-[14px] w-[14px] items-center justify-center bg-[#a01818] text-[9px] font-bold leading-none text-white">A</div>
    <svg width="16" height="16" viewBox="0 0 16 16"><circle cx="8" cy="8" r="7.5" fill="#7cc47c" /><circle cx="9" cy="9" r="5" fill="#5b3fc0" stroke="#fff" /></svg>
    <svg width="14" height="16" viewBox="0 0 14 16"><path d="M0 5h4l5-4v14l-5-4H0z" fill="#d0552a" stroke="#222" strokeWidth=".6" /><path d="M11 4q2 4 0 8" stroke="#222" fill="none" /></svg>
    <svg width="15" height="16" viewBox="0 0 15 16"><rect x="5" y="1" width="9" height="8" fill="#9cc4f0" stroke="#456" strokeWidth=".6" /><rect x="1" y="6" width="9" height="8" fill="#c4daf4" stroke="#456" strokeWidth=".6" /></svg>
    <svg className="ml-[3px]" width="15" height="16" viewBox="0 0 15 16"><circle cx="6" cy="7" r="6" fill="#aaa" stroke="#444" strokeWidth=".7" /><circle cx="6" cy="7" r="2" fill="#444" /><path d="M6 15l8-6" stroke="#8aa0e0" /></svg>
    <svg className="ml-[3px]" width="15" height="15" viewBox="0 0 15 15"><rect x="0" y="2" width="12" height="9" fill="#f2d26a" stroke="#555" strokeWidth=".6" /><path d="M13 5v9H7" stroke="#1a3a8a" fill="none" /></svg>
    <svg className="ml-[2px]" width="15" height="15" viewBox="0 0 15 15"><path d="M2 5l4 3 7 6H5z" fill="#777" /><path d="M2 1l4 2v3l-3 0z" fill="#40b040" /></svg>
    <svg className="ml-[1px]" width="16" height="16" viewBox="0 0 16 16"><rect width="16" height="16" rx="2" fill="#d8202a" /><path d="M3 13L9 3M8 13l5-10" stroke="#fff" strokeWidth="2" /></svg>
    <svg width="16" height="16" viewBox="0 0 16 16"><circle cx="7" cy="8" r="6" fill="#1a3aa0" stroke="#ddd" /><circle cx="7" cy="8" r="2.5" fill="#fff" /><path d="M12 6l3 6h-4z" fill="#333" /></svg>
  </div>
);

const Taskbar = () => (
  <div className="flex h-[34px] shrink-0 border-t-2 border-[#3c83e8] bg-linear-to-b from-[#2f6fe6] via-[#245edb] to-[#2053c9] text-[12px] text-white">
    <div className="flex h-[32px] w-[96px] items-center rounded-r-[10px] bg-linear-to-b from-[#4fa74f] via-[#3c963c] to-[#2f7f2f] pl-[10px] shadow-[inset_-2px_0_3px_rgba(0,0,0,0.3)]">
      <svg width="20" height="18" viewBox="0 0 20 18"><path d="M2 3q3-2 7 0l-1 6q-4-2-7 0z" fill="#e2552c" /><path d="M10 3q4 2 8 0l-1 6q-4 2-8 0z" fill="#7cb83e" /><path d="M1 10q3-2 7 0l-1 6q-4-2-7 0z" fill="#4f8ce0" /><path d="M9 10q4 2 8 0l-1 6q-4 2-8 0z" fill="#f4c430" /></svg>
      <span className="ml-[5px] text-[16px] font-bold italic leading-none tracking-[0.3px]">пуск</span>
    </div>
    <div className="ml-[10px] h-[24px] w-[5px] self-center bg-[repeating-linear-gradient(0deg,#123c9c_0,#123c9c_2px,transparent_2px,transparent_4px)]" />
    <div className="ml-[8px] flex items-center gap-[7px]">
      <svg width="16" height="16" viewBox="0 0 16 16"><circle cx="8" cy="8" r="7.5" fill="#fff" stroke="#2a8a3a" strokeWidth="1.4" /><path d="M5 4v5q0 3 3 3t3-3V4" stroke="#2a8a3a" fill="none" strokeWidth="2" /></svg>
      <div className="h-[13px] w-[16px] border border-black border-t-[3px] border-t-[#1a2a8a] bg-white" />
      <TaskIcon k="chrome" />
      <svg width="11" height="16" viewBox="0 0 11 16"><path d="M1 1h10v2H9v12H6V8Q1 8 1 4z" fill="#e8882a" /></svg>
    </div>
    <span className="ml-[33px] mt-[3px] text-[11px] leading-none text-[#bcd2f5]">»</span>
    <div className="ml-[9px] h-[24px] w-[5px] self-center bg-[repeating-linear-gradient(0deg,#123c9c_0,#123c9c_2px,transparent_2px,transparent_4px)]" />
    <div className="ml-[6px] flex items-center gap-[2.3px]">
      {taskButtons.map(([k, t, on], i) => (
        <div key={i} className={`flex h-[26px] w-[53px] items-center gap-[4px] rounded-[2px] pl-[9px] ${on ? "bg-[#1c4aa8] shadow-[inset_1px_1px_2px_rgba(0,0,0,0.4)]" : "bg-[#3f7ce8]"}`}>
          <TaskIcon k={k} />
          <span>{t}</span>
        </div>
      ))}
    </div>
    <div className="ml-auto flex w-[255px] items-center border-l border-[#0a3a8a] bg-linear-to-b from-[#1aa0ee] via-[#1290e4] to-[#0f7fd8]">
      <TrayIcons />
      <span className="ml-[9px]">8:35</span>
    </div>
  </div>
);

const Desktop = () => (
  <>
    <div className="absolute left-0 top-0 h-[60px] w-[6px] bg-white" />
    <div className="absolute left-0 top-0 h-[2px] w-full bg-[#b9cdea]" />
    <div className="absolute right-0 top-0 h-[17px] w-[15px] bg-[#c2d4ee]" />
    <div className="absolute right-[10px] top-[35px] h-[13px] w-[5px] bg-[repeating-linear-gradient(0deg,#333_0,#333_2px,transparent_2px,transparent_5px)]" />
    <div className="absolute right-0 top-[99px] h-[1px] w-[15px] bg-[#bbb]" />
    <div className="absolute right-[1px] top-[105px]"><Up c="#aaa" /></div>
    <div className="absolute right-0 top-[117px] h-[567px] w-[13px] bg-[#c2c2c2]" />
    <div className="absolute right-[1px] top-[677px]"><Down c="#555" /></div>
    <div className="absolute bottom-0 left-0 h-[53px] w-full bg-[#dedede]" />
    <div className="absolute left-[3px] top-[700px] h-[28px] w-[205px] rounded-b-[3px] border border-[#b8b8b8] bg-[#efefef]" />
    <div className="absolute left-[15px] top-[712px] h-[6px] w-[14px] bg-[#a8c0e8]" />
    <div className="absolute left-[840px] top-[717px] h-[2px] w-[15px] bg-[#666]" />
    <div className="absolute left-[860px] top-[716px] h-[3px] w-[121px] border-b border-[#444]" />
  </>
);

export default function App() {
  return (
    <div className="relative flex h-[768px] w-[1024px] flex-col overflow-hidden bg-[#f6f6f6] font-['DejaVu_Sans_Condensed','Liberation_Sans',sans-serif]">
      <div className="relative flex-1">
        <Desktop />
        {/* illustrator window */}
        <div className="absolute left-[6px] top-[2px] flex h-[713px] w-[1003px] flex-col rounded-t-[3px] border border-[#1c1c1c] bg-[#454545] px-[3px]">
          <TitleBar />
          <ControlBar />
          <div className="flex min-h-0 flex-1 pb-[2px]">
            <Toolbar />
            <DocArea />
            <RightStrip />
          </div>
        </div>
      </div>
      <Taskbar />
      <LayersPanel />
      <ActionsPanel />
      <AttributesPanel />
      <ObjectMenu />
      <SubMenu />
    </div>
  );
}
